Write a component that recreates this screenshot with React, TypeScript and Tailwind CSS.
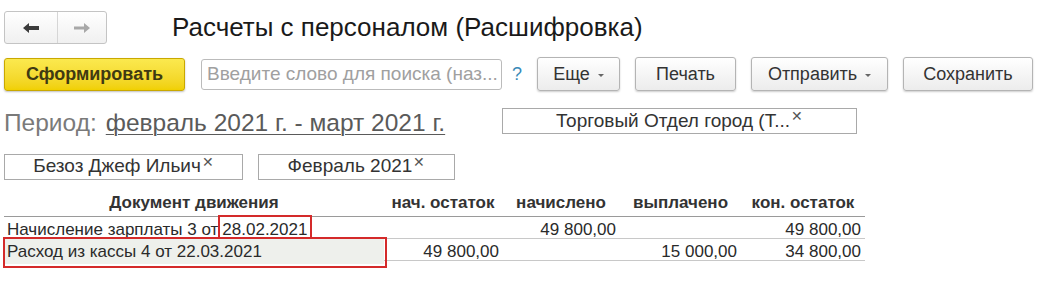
import React from "react"

const font = { fontFamily: '"Liberation Sans", Arial, sans-serif' }

function Btn({ label, drop, w }: { label: string; drop?: boolean; w: string }) {
  return (
    <button
      className={`${w} h-[34px] flex items-center justify-center gap-2 rounded-[3px] border border-[#b4b4b4] bg-gradient-to-b from-white to-[#ececec] text-[18px] text-[#333] shadow-[0_1px_2px_rgba(0,0,0,0.2)]`}
    >
      {label}
      {drop && <span className="mt-[2px] h-0 w-0 border-x-[3px] border-t-[3px] border-x-transparent border-t-[#666]" />}
    </button>
  )
}

function Chip({ label, w }: { label: string; w: string }) {
  return (
    <div className={`${w} h-[26px] flex items-center justify-center border border-[#a9a9a9] text-[19px] text-[#333]`}>
      {label}
      <span className="ml-[1px] -mt-[8px] text-[14px] text-[#555]">✕</span>
    </div>
  )
}

const rows = [
  { doc: "Начисление зарплаты 3 от ", date: "28.02.2021", a: "", b: "49 800,00", c: "", d: "49 800,00" },
  { doc: "Расход из кассы 4 от 22.03.2021", date: "", a: "49 800,00", b: "", c: "15 000,00", d: "34 800,00" },
]

export default function App() {
  return (
    <div className="w-[1044px] h-[281px] bg-white overflow-hidden" style={font}>
      {/* top row */}
      <div className="flex h-[33px] items-center mt-[11px] pl-[4px]">
        <div className="flex h-[33px] w-[103px] rounded-[3px] border border-[#c4c4c4] bg-gradient-to-b from-white to-[#f0f0f0]">
          <div className="flex w-[53px] items-center justify-center border-r border-[#d6d6d6]">
            <svg width="18" height="12" viewBox="0 0 18 12">
              <path d="M1 6 L7 1 L7 4 L17 4 L17 8 L7 8 L7 11 Z" fill="#3c3c3c" />
            </svg>
          </div>
          <div className="flex flex-1 items-center justify-center">
            <svg width="18" height="12" viewBox="0 0 18 12">
              <path d="M17 6 L11 1 L11 4.5 L1 4.5 L1 7.5 L11 7.5 L11 11 Z" fill="#a8a8a8" />
            </svg>
          </div>
        </div>
        <h1 className="ml-[65px] -mt-[1px] text-[26px] leading-none text-[#1a1a1a]">Расчеты с персоналом (Расшифровка)</h1>
      </div>

      {/* command bar */}
      <div className="mt-[13px] flex items-center pl-[4px]">
        <button className="h-[33px] w-[181px] rounded-[3px] border border-[#c9a800] bg-gradient-to-b from-[#fbe94e] to-[#f0d000] text-[18px] font-bold text-[#3f3a12] shadow-[0_1px_2px_rgba(0,0,0,0.25)]">
          Сформировать
        </button>
        <div className="ml-[16px] flex h-[31px] w-[301px] items-center rounded-[3px] border border-[#bbb] px-[5px] text-[19px] text-[#a0a0a0] whitespace-nowrap overflow-hidden">
          Введите слово для поиска (наз...
        </div>
        <span className="ml-[10px] text-[18px] text-[#3a8ab8]">?</span>
        <div className="ml-[15px] flex gap-[15px]">
          <Btn label="Еще" drop w="w-[83px]" />
          <Btn label="Печать" w="w-[101px]" />
          <Btn label="Отправить" drop w="w-[137px]" />
          <Btn label="Сохранить" w="w-[130px]" />
        </div>
      </div>

      {/* period row */}
      <div className="mt-[20px] flex items-center pl-[4px]">
        <div className="flex w-[498px] items-center">
          <span className="text-[24.5px] leading-none text-[#7a7a7a]">Период:</span>
          <span className="ml-[9px] text-[24.5px] leading-none text-[#5a5a5a] underline underline-offset-[3px] decoration-1">
            февраль 2021 г. - март 2021 г.
          </span>
        </div>
        <div className="-mt-[5px]">
          <Chip label="Торговый Отдел город (Т..." w="w-[355px]" />
        </div>
      </div>

      {/* filters */}
      <div className="mt-[18px] flex gap-[15px] pl-[4px]">
        <Chip label="Безоз Джеф Ильич" w="w-[239px]" />
        <Chip label="Февраль 2021" w="w-[197px]" />
      </div>

      {/* table */}
      <div className="mt-[12px] ml-[4px] w-[861px] text-[17px] text-[#2a2a2a]">
        <div className="grid grid-cols-[380px_118px_118px_121px_124px] border-b border-[#9a9a9a] pb-[2px] text-[17px] font-bold leading-[22px] text-[#333]">
          <div className="text-center">Документ движения</div>
          <div className="text-center">нач. остаток</div>
          <div className="text-center">начислено</div>
          <div className="text-center">выплачено</div>
          <div className="text-center">кон. остаток</div>
        </div>
        {rows.map((r, i) => (
          <div
            key={i}
            className="grid h-[22px] grid-cols-[380px_118px_118px_121px_124px] items-center border-b border-[#c8c8c8]"
          >
            <div
              className={
                i === 1
                  ? "relative flex h-full items-center bg-[#eef0ec] pl-[3px]"
                  : "flex h-full items-center pl-[3px]"
              }
            >
              {r.doc}
              {r.date && (
                <span className="relative ml-[3px] px-[1px]">
                  {r.date}
                  <span className="absolute -left-[3px] -right-[4px] -top-[2px] -bottom-[1px] border-2 border-[#d42a2a]" />
                </span>
              )}
              {i === 1 && (
                <span className="absolute -left-[1px] -right-[3px] -top-[2px] -bottom-[4px] border-2 border-[#d42a2a]" />
              )}
            </div>
            <div className="pr-[3px] text-right">{r.a}</div>
            <div className="pr-[4px] text-right">{r.b}</div>
            <div className="pr-[4px] text-right">{r.c}</div>
            <div className="pr-[4px] text-right">{r.d}</div>
          </div>
        ))}
      </div>
    </div>
  )
}
